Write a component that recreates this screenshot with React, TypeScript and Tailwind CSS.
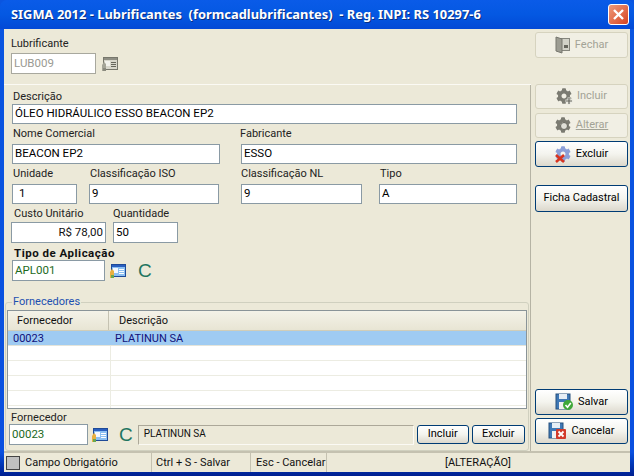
import React from "react";
import { FaCog } from "react-icons/fa";

const font = "font-['Roboto',sans-serif]";

function Input({ w, value, h = "h-[21px]", cls = "", text = "text-black" }: { w: string; value: string; h?: string; cls?: string; text?: string }) {
  return (
    <div className={`${w} ${h} ${text} ${cls} shrink-0 bg-white border border-[#8a9aa4] px-[2px] text-[11.5px] flex items-center whitespace-nowrap overflow-hidden`}>
      {value}
    </div>
  );
}

function Label({ children, cls = "" }: { children: React.ReactNode; cls?: string }) {
  return <div className={`text-[11px] leading-[14px] text-[#222] whitespace-nowrap ${cls}`}>{children}</div>;
}

function Btn({ children, disabled, h, cls = "" }: { children: React.ReactNode; disabled?: boolean; h: string; cls?: string }) {
  return (
    <div
      className={`${h} ${cls} flex items-center justify-center gap-[4px] rounded-[3px] text-[11px] whitespace-nowrap border ${
        disabled
          ? "border-[#d6d3bf] bg-[#f1efe4] text-[#a3a396]"
          : "border-[#003c74] bg-gradient-to-b from-white via-[#f4f4ee] to-[#dcd8cc] text-black"
      }`}
    >
      {children}
    </div>
  );
}

function LookupIcon({ gray }: { gray?: boolean }) {
  return (
    <svg width="17" height="16" viewBox="0 0 17 16" className="shrink-0">
      <rect x="1.5" y="1.5" width="14" height="12" fill={gray ? "#d8d7cc" : "#8cc0f2"} stroke={gray ? "#77776c" : "#1f4a98"} />
      <rect x="2" y="2" width="13" height="2" fill={gray ? "#8f8f84" : "#2a5fc0"} />
      <rect x="9" y="6" width="5" height="1" fill={gray ? "#66665c" : "#fff"} />
      <rect x="9" y="8" width="5" height="1" fill={gray ? "#66665c" : "#fff"} />
      <rect x="9" y="10" width="5" height="1" fill={gray ? "#66665c" : "#fff"} />
      <rect x="3" y="5" width="5" height="5" fill={gray ? "#f2f2ec" : "#f4f8ff"} />
      <path d="M0 15 L0 9 L2 6 L4 8 L4 15 Z" fill={gray ? "#a5a598" : "#e8b040"} />
      <rect x="1" y="12" width="3" height="3" fill={gray ? "#8a8a7e" : "#6aa84f"} />
    </svg>
  );
}

function Door() {
  return (
    <svg width="16" height="18" viewBox="0 0 16 18">
      <rect x="5.5" y="2.5" width="9" height="12" fill="#d2d2c8" stroke="#85857c" />
      <path d="M1 1 L7 3 L7 17 L1 15 Z" fill="#9c9c92" stroke="#77776f" />
      <rect x="9" y="9" width="4" height="3" fill="#66665e" />
    </svg>
  );
}

function Gear({ badge }: { badge: "plus" | "edit" | "x" }) {
  const color = badge === "x" ? "#8c9fd8" : "#7b7b72";
  return (
    <span className="relative inline-block w-[17px] h-[17px] shrink-0">
      <FaCog size={16} color={color} />
      {badge === "plus" && (
        <svg width="8" height="8" viewBox="0 0 8 8" className="absolute right-0 bottom-0">
          <path d="M4 0.5 V7.5 M0.5 4 H7.5" stroke="#e6e6de" strokeWidth="3" />
          <path d="M4 1 V7 M1 4 H7" stroke="#66665e" strokeWidth="1.2" />
        </svg>
      )}
      {badge === "edit" && <span className="absolute right-[4px] bottom-[4px] w-[8px] h-[8px] rounded-full bg-[#e0e0d8] border border-[#66665e]" />}
      {badge === "x" && (
        <svg width="10" height="9" viewBox="0 0 10 9" className="absolute left-0 bottom-0">
          <path d="M1 1 L9 8 M9 1 L1 8" stroke="#d8341f" strokeWidth="2.6" />
        </svg>
      )}
    </span>
  );
}

function Floppy({ badge }: { badge: "ok" | "x" }) {
  return (
    <svg width="19" height="18" viewBox="0 0 19 18">
      <rect x="1" y="1" width="14" height="15" fill="#3f78b5" stroke="#27507e" />
      <rect x="4" y="1" width="8" height="5" fill="#e6eef5" />
      <rect x="4" y="9" width="8" height="7" fill="#f1f1f1" />
      {badge === "ok" ? (
        <>
          <circle cx="13" cy="12" r="5" fill="#3fa83a" />
          <path d="M10.5 12 L12.5 14.2 L15.8 10" fill="none" stroke="#fff" strokeWidth="1.6" />
        </>
      ) : (
        <>
          <rect x="8" y="7" width="10" height="10" rx="1" fill="#d23a2a" />
          <path d="M10.5 9.5 L15.5 14.5 M15.5 9.5 L10.5 14.5" stroke="#fff" strokeWidth="1.8" />
        </>
      )}
    </svg>
  );
}

function CMark() {
  return <span className="text-[#1f7560] text-[19px] leading-[20px] pt-[1px] font-['Liberation_Sans',sans-serif]">C</span>;
}

export default function App() {
  return (
    <div className={`w-[634px] h-[476px] flex flex-col overflow-hidden bg-gradient-to-b from-[#0a55e0] via-[#0a50e0] via-95% to-[#001f90] ${font}`}>
      {/* title bar */}
      <div className="h-[29px] shrink-0 flex items-center justify-between pl-[11px] pr-[5px] rounded-t-[7px] bg-gradient-to-b from-[#0a5be8] via-[#0458e2] to-[#0349d6]">
        <div className="text-white font-bold text-[12.9px] whitespace-pre font-['Noto_Sans',sans-serif] [text-shadow:1px_1px_0_#0a2f80]">
          SIGMA 2012 - Lubrificantes  (formcadlubrificantes)  - Reg. INPI: RS 10297-6
        </div>
        <div className="w-[21px] h-[21px] rounded-[3px] border border-white bg-gradient-to-br from-[#ee9a7a] to-[#d4401c] flex items-center justify-center">
          <svg width="13" height="13" viewBox="0 0 13 13">
            <path d="M2 2 L11 11 M11 2 L2 11" stroke="#fff" strokeWidth="2.4" />
          </svg>
        </div>
      </div>

      {/* client */}
      <div className="flex-1 mx-[4px] mb-[4px] bg-[#ece9d8] flex flex-col min-h-0 text-[#111]">
        <div className="flex-1 flex min-h-0">
          {/* left */}
          <div className="w-[527px] flex flex-col">
            <div className="h-[56px] shrink-0 border-b border-[#fbfaf4] pl-[7px] pt-[8px]">
              <Label>Lubrificante</Label>
              <div className="flex items-center gap-[6px] mt-[2px]">
                <Input w="w-[85px]" value="LUB009" text="text-[#9a9a92]" cls="!border-[#a8a89e]" />
                <LookupIcon gray />
              </div>
            </div>

            <div className="flex-1 flex flex-col border-r border-[#b5b3a4] min-h-0">
              <div className="pl-[8px] pt-[5px]">
                <Label cls="ml-[1px]">Descrição</Label>
                <Input w="w-[505px]" h="h-[20px]" value="ÓLEO HIDRÁULICO ESSO BEACON EP2" />

                <div className="flex mt-[3px]">
                  <div className="w-[229px]">
                    <Label cls="ml-[1px] h-[17px]">Nome Comercial</Label>
                    <Input w="w-[208px]" h="h-[20px]" value="BEACON EP2" />
                  </div>
                  <div>
                    <Label cls="ml-[-1px] h-[17px]">Fabricante</Label>
                    <Input w="w-[276px]" h="h-[20px]" value="ESSO" />
                  </div>
                </div>

                <div className="flex mt-[3px]">
                  <div className="w-[77px]">
                    <Label cls="ml-[1px] h-[17px]">Unidade</Label>
                    <Input w="w-[65px]" h="h-[20px]" value="1" cls="pl-[6px]" />
                  </div>
                  <div className="w-[152px]">
                    <Label cls="ml-[1px] h-[17px]">Classificação ISO</Label>
                    <Input w="w-[130px]" h="h-[20px]" value="9" />
                  </div>
                  <div className="w-[138px]">
                    <Label cls="h-[17px]">Classificação NL</Label>
                    <Input w="w-[121px]" h="h-[20px]" value="9" />
                  </div>
                  <div>
                    <Label cls="ml-[1px] h-[17px]">Tipo</Label>
                    <Input w="w-[138px]" h="h-[20px]" value="A" />
                  </div>
                </div>

                <div className="flex mt-[3px]">
                  <div className="w-[102px] ml-[-1px]">
                    <Label cls="ml-[3px] h-[15px]">Custo Unitário</Label>
                    <div className="w-[95px] h-[21px] bg-white border border-[#8a9aa4] px-[2px] text-[11.5px] flex items-center justify-end">R$ 78,00</div>
                  </div>
                  <div>
                    <Label cls="h-[15px]">Quantidade</Label>
                    <Input w="w-[65px]" value="50" />
                  </div>
                </div>

                <div className="font-bold text-[11.5px] leading-[14px] mt-[3px] ml-[2px] tracking-[0.5px]">Tipo de Aplicação</div>
                <div className="flex items-center">
                  <Input w="w-[93px]" value="APL001" text="text-[#1d6a1d]" />
                  <span className="ml-[5px] flex"><LookupIcon /></span>
                  <span className="ml-[11px] flex"><CMark /></span>
                </div>
              </div>

              {/* group */}
              <div className="relative ml-[1px] mr-[1px] mt-[21px] flex-1 border border-[#d0d0bf] rounded-[3px] min-h-0 flex flex-col">
                <div className="absolute left-[6px] top-[-8px] bg-[#ece9d8] px-[1px] text-[11px] leading-[14px] text-[#1c50b0]">Fornecedores</div>
                <div className="mx-[1px] mt-[7px] h-[99px] shrink-0 bg-white border border-[#8a9498] flex flex-col overflow-hidden">
                  <div className="h-[20px] shrink-0 flex bg-gradient-to-b from-[#f4f2e8] to-[#e8e5d4] text-[11px] leading-[20px] border-b border-[#d0cdb8]">
                    <div className="w-[101px] pl-[9px] border-r border-[#c5c2b2]">Fornecedor</div>
                    <div className="pl-[10px]">Descrição</div>
                  </div>
                  <div className="h-[15px] shrink-0 flex bg-[#9fcbf2] text-[#10107a] text-[11px] leading-[15px] border-b border-[#e4e4da]">
                    <div className="w-[104px] pl-[5px]">00023</div>
                    <div className="pl-[3px]">PLATINUN SA</div>
                  </div>
                  {[0, 1, 2, 3, 4].map((i) => (
                    <div key={i} className="h-[15px] shrink-0 flex border-b border-[#ecece2]">
                      <div className="w-[103px] border-r border-[#ecece2]" />
                    </div>
                  ))}
                </div>
                <div className="pl-[5px] mt-[2px]">
                  <Label cls="!leading-[13px]">Fornecedor</Label>
                  <div className="flex items-center">
                    <Input w="w-[79px]" value="00023" text="text-[#1d6a1d]" cls="ml-[-2px]" />
                    <span className="ml-[4px] flex"><LookupIcon /></span>
                    <span className="ml-[10px] flex"><CMark /></span>
                    <div className="ml-[5px] w-[276px] h-[20px] shrink-0 border border-t-[#aca899] border-l-[#aca899] border-r-[#fbfaf4] border-b-[#fbfaf4] bg-[#ece9d8] text-[10px] pl-[5px] leading-[16px]">
                      PLATINUN SA
                    </div>
                    <Btn h="h-[19px]" cls="w-[52px] ml-[3px] shrink-0">Incluir</Btn>
                    <Btn h="h-[19px]" cls="w-[53px] ml-[3px] shrink-0">Excluir</Btn>
                  </div>
                </div>
              </div>
            </div>
          </div>

          {/* right */}
          <div className="flex-1 flex flex-col pl-[4px] pr-[2px] pt-[3px] pb-[7px]">
            <Btn disabled h="h-[26px]"><Door />Fechar</Btn>
            <Btn disabled h="h-[25px]" cls="mt-[26px]"><Gear badge="plus" />Incluir</Btn>
            <Btn disabled h="h-[25px]" cls="mt-[4px]"><Gear badge="edit" /><span className="underline">Alterar</span></Btn>
            <Btn h="h-[26px]" cls="mt-[3px]"><Gear badge="x" />Excluir</Btn>
            <Btn h="h-[27px]" cls="mt-[18px]">Ficha Cadastral</Btn>
            <div className="flex-1" />
            <Btn h="h-[26px]"><Floppy badge="ok" />Salvar</Btn>
            <Btn h="h-[26px]" cls="mt-[3px]"><Floppy badge="x" />Cancelar</Btn>
          </div>
        </div>

        {/* status */}
        <div className="h-[21px] shrink-0 border-t-2 border-[#c4c1b0] flex items-center text-[11px] leading-[19px] whitespace-nowrap">
          <div className="w-[148px] h-full flex items-center pl-[2px] border-r border-[#c4c1b0]">
            <span className="w-[14px] h-[14px] bg-[#c0c0c0] border border-[#444] mr-[5px]" />
            Campo Obrigatório
          </div>
          <div className="w-[99px] h-full pl-[4px] border-r border-[#c4c1b0]">Ctrl + S - Salvar</div>
          <div className="w-[76px] h-full pl-[5px] border-r border-[#c4c1b0]">Esc - Cancelar</div>
          <div className="flex-1 pl-[118px]">[ALTERAÇÃO]</div>
        </div>
      </div>
    </div>
  );
}
